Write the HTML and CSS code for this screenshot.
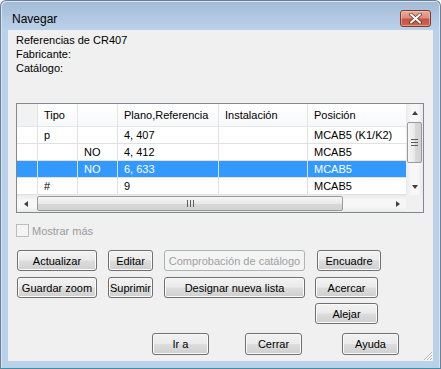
FILE: index.html
```html
<!DOCTYPE html>
<html lang="es">
<head>
  <meta charset="UTF-8" />
  <title>Navegar</title>
  <link rel="stylesheet" href="styles.css">
</head>
<body>

<div class="window">
  <div class="titlebar">
    <span class="title">Navegar</span>
    <span class="close">
      <svg width="13" height="11" viewBox="0 0 13 11">
        <path d="M2 1.5 L11 9.5 M11 1.5 L2 9.5" stroke="#5a2a24" stroke-width="3.6" stroke-linecap="round" fill="none"/>
        <path d="M2 1.5 L11 9.5 M11 1.5 L2 9.5" stroke="#ffffff" stroke-width="2.2" stroke-linecap="round" fill="none"/>
      </svg>
    </span>
  </div>

  <div class="client">
    <div class="info">
      <div>Referencias de CR407</div>
      <div>Fabricante:</div>
      <div>Catálogo:</div>
    </div>

    <div class="datagrid">
      <div class="dg-body">
        <div class="dg-rows">
          <div class="dg-row dg-head">
            <div class="cell c-sel"></div>
            <div class="cell c-tipo">Tipo</div>
            <div class="cell c-no"></div>
            <div class="cell c-plano">Plano,Referencia</div>
            <div class="cell c-inst">Instalación</div>
            <div class="cell c-pos">Posición</div>
          </div>
          <div class="dg-row">
            <div class="cell c-sel"></div>
            <div class="cell c-tipo">p</div>
            <div class="cell c-no"></div>
            <div class="cell c-plano">4, 407</div>
            <div class="cell c-inst"></div>
            <div class="cell c-pos">MCAB5 (K1/K2)</div>
          </div>
          <div class="dg-row">
            <div class="cell c-sel"></div>
            <div class="cell c-tipo"></div>
            <div class="cell c-no">NO</div>
            <div class="cell c-plano">4, 412</div>
            <div class="cell c-inst"></div>
            <div class="cell c-pos">MCAB5</div>
          </div>
          <div class="dg-row selected">
            <div class="cell c-sel"></div>
            <div class="cell c-tipo"></div>
            <div class="cell c-no">NO</div>
            <div class="cell c-plano">6, 633</div>
            <div class="cell c-inst"></div>
            <div class="cell c-pos">MCAB5</div>
          </div>
          <div class="dg-row">
            <div class="cell c-sel"></div>
            <div class="cell c-tipo">#</div>
            <div class="cell c-no"></div>
            <div class="cell c-plano">9</div>
            <div class="cell c-inst"></div>
            <div class="cell c-pos">MCAB5</div>
          </div>
        </div>

        <div class="vscroll">
          <div class="sb-btn"><span class="arr arr-up"></span></div>
          <div class="sb-track">
            <div class="thumb thumb-v"><span class="grip-v"></span></div>
          </div>
          <div class="sb-btn"><span class="arr arr-down"></span></div>
        </div>
      </div>

      <div class="dg-foot">
        <div class="hscroll">
          <div class="sb-btn"><span class="arr arr-left"></span></div>
          <div class="sb-track">
            <div class="thumb thumb-h"><span class="grip-h"></span></div>
          </div>
          <div class="sb-btn"><span class="arr arr-right"></span></div>
        </div>
        <div class="corner"></div>
      </div>
    </div>

    <div class="check">
      <span class="box"></span>
      <span class="check-label">Mostrar más</span>
    </div>

    <div class="btn-row row1">
      <button class="btn w80 ml1">Actualizar</button>
      <button class="btn w45 ml11">Editar</button>
      <button class="btn w141 ml11" disabled>Comprobación de catálogo</button>
      <button class="btn w64 ml12">Encuadre</button>
    </div>
    <div class="btn-row row2">
      <button class="btn w80 ml1">Guardar zoom</button>
      <button class="btn w45 ml11">Suprimir</button>
      <button class="btn w141 ml11">Designar nueva lista</button>
      <button class="btn w63 ml10">Acercar</button>
    </div>
    <div class="btn-row row3">
      <button class="btn w63 ml299">Alejar</button>
    </div>
    <div class="btn-row row4">
      <button class="btn w57 ml136">Ir a</button>
      <button class="btn w57 ml36">Cerrar</button>
      <button class="btn w57 ml40">Ayuda</button>
    </div>

    <svg class="sizegrip" width="11" height="11" viewBox="0 0 11 11">
      <path d="M10 2 L2 10 M10 5 L5 10 M10 8 L8 10" stroke="#b8b8b8" stroke-width="1" fill="none"/>
      <path d="M10.7 2.7 L2.7 10.7 M10.7 5.7 L5.7 10.7" stroke="#ffffff" stroke-width="0.8" fill="none"/>
    </svg>
  </div>
</div>

</body>
</html>
```

FILE: styles.css
```css
body {
  margin: 0;
  background: #ffffff;
  font-family: "Liberation Sans", Arial, sans-serif;
  font-size: 11px;
  color: #000000;
}

.window {
  box-sizing: border-box;
  width: 441px;
  height: 369px;
  border: 1px solid #6c8099;
  border-bottom-color: #3f8ea3;
  border-radius: 6px 6px 0 0;
  padding: 0 7px 7px;
  background: linear-gradient(to bottom, #a3bad5 0px, #b3c9e3 18px, #bad1ea 29px, #bad1ea 100%);
  box-shadow: inset 1px 1px 0 #d6e4f3, inset -1px 0 0 #d6e4f3;
}

/* title bar */
.titlebar {
  height: 29px;
  display: flex;
  align-items: flex-start;
}

.title {
  margin-top: 11px;
  margin-left: 4px;
  font-size: 12px;
  line-height: 15px;
  color: #000000;
}

.close {
  box-sizing: border-box;
  width: 31px;
  height: 17px;
  margin-top: 9px;
  margin-left: auto;
  margin-right: 2px;
  border: 1px solid #7e3a31;
  border-radius: 3px;
  background: linear-gradient(to bottom, #e9aa9b 0%, #dc8d7b 45%, #c9533f 55%, #cd644f 100%);
  box-shadow: inset 0 0 0 1px rgba(255, 220, 210, 0.45);
  display: flex;
  align-items: center;
  justify-content: center;
}

.close svg {
  display: block;
}

/* client area */
.client {
  position: relative;
  box-sizing: border-box;
  height: 331px;
  background: #f0f0f0;
  padding: 3px 0 0 8px;
}

.info {
  line-height: 14px;
}

/* data grid */
.datagrid {
  box-sizing: border-box;
  width: 408px;
  height: 110px;
  margin-top: 28px;
  border: 1px solid #828790;
  background: #ffffff;
}

.dg-body {
  display: flex;
  height: 91px;
}

.dg-rows {
  width: 389px;
}

.dg-row {
  display: flex;
  height: 17px;
}

.dg-head {
  height: 23px;
  background: linear-gradient(to bottom, #ffffff, #f7f8fa);
}

.cell {
  box-sizing: border-box;
  height: 100%;
  border-right: 1px solid #e1e1e1;
  border-bottom: 1px solid #e1e1e1;
  padding-left: 6px;
  display: flex;
  align-items: center;
  white-space: nowrap;
  overflow: hidden;
}

.dg-head .cell {
  border-right-color: #e4e5e7;
  border-bottom-color: #e4e5e7;
}

.dg-head .c-sel {
  background: #f2f2f2;
}

.c-sel { width: 21px; }
.c-tipo { width: 40px; }
.c-no { width: 40px; }
.c-plano { width: 101px; }
.c-inst { width: 89px; }
.c-pos { width: 98px; border-right: none; }

.dg-row.selected .cell {
  background: #3399ff;
  color: #ffffff;
  border-right-color: #cfe5fb;
  border-bottom-color: #e1e1e1;
}

/* scrollbars */
.vscroll {
  width: 17px;
  display: flex;
  flex-direction: column;
  background: linear-gradient(to right, #eaeaea, #f7f7f7 30%, #f7f7f7 70%, #eaeaea);
}

.sb-btn {
  width: 17px;
  height: 17px;
  flex: none;
  display: flex;
  align-items: center;
  justify-content: center;
}

.sb-track {
  flex: 1;
  display: flex;
}

.vscroll .sb-track {
  flex-direction: column;
}

.thumb {
  box-sizing: border-box;
  border: 1px solid #9a9a9a;
  border-radius: 2px;
  display: flex;
  align-items: center;
  justify-content: center;
}

.thumb-v {
  width: 15px;
  height: 41px;
  margin: 1px 0 0 1px;
  background: linear-gradient(to right, #f6f6f6, #e9e9e9 50%, #d8d8d8 55%, #d2d2d2);
}

.grip-v {
  width: 7px;
  height: 5px;
  border-top: 1px solid #606060;
  border-bottom: 1px solid #606060;
  background: linear-gradient(to bottom, transparent 2px, #606060 2px, #606060 3px, transparent 3px);
}

.dg-foot {
  display: flex;
  height: 17px;
}

.hscroll {
  width: 389px;
  display: flex;
  background: linear-gradient(to bottom, #eaeaea, #f7f7f7 30%, #f7f7f7 70%, #eaeaea);
}

.thumb-h {
  width: 306px;
  height: 15px;
  margin: 1px 0 0 3px;
  background: linear-gradient(to bottom, #f6f6f6, #e9e9e9 50%, #d8d8d8 55%, #d2d2d2);
}

.grip-h {
  width: 5px;
  height: 7px;
  border-left: 1px solid #606060;
  border-right: 1px solid #606060;
  background: linear-gradient(to right, transparent 2px, #606060 2px, #606060 3px, transparent 3px);
}

.hscroll .sb-btn:last-child {
  margin-left: auto;
}

.corner {
  width: 17px;
  background: #f0f0f0;
}

.arr {
  width: 0;
  height: 0;
  border-style: solid;
  border-color: transparent;
}

.arr-up {
  border-width: 0 3.5px 4px;
  border-bottom-color: #404040;
}

.arr-down {
  border-width: 4px 3.5px 0;
  border-top-color: #404040;
}

.arr-left {
  border-width: 3.5px 4px 3.5px 0;
  border-right-color: #404040;
}

.arr-right {
  border-width: 3.5px 0 3.5px 4px;
  border-left-color: #404040;
}

/* checkbox */
.check {
  display: flex;
  align-items: center;
  height: 13px;
  margin-top: 11px;
}

.box {
  box-sizing: border-box;
  width: 13px;
  height: 13px;
  border: 1px solid #bcbcbc;
  background: #f4f4f4;
}

.check-label {
  margin-left: 3px;
  margin-top: 1px;
  color: #9b9b9b;
  line-height: 13px;
}

/* buttons */
.btn-row {
  display: flex;
}

.row1 { margin-top: 13px; }
.row2 { margin-top: 6px; }
.row3 { margin-top: 5px; }
.row4 { margin-top: 9px; }

.btn {
  box-sizing: border-box;
  height: 21px;
  padding: 0;
  border: 1px solid #707070;
  border-radius: 3px;
  background: linear-gradient(to bottom, #f2f2f2 0%, #ebebeb 48%, #dddddd 52%, #cfcfcf 100%);
  box-shadow: inset 0 0 0 1px #fbfbfb;
  font-family: "Liberation Sans", Arial, sans-serif;
  font-size: 11px;
  color: #000000;
  white-space: nowrap;
}

.row4 .btn {
  height: 22px;
}

.btn:disabled {
  border-color: #adb2b5;
  background: #f4f4f4;
  box-shadow: none;
  color: #a0a0a0;
}

.w45 { width: 45px; }
.w57 { width: 57px; }
.w63 { width: 63px; }
.w64 { width: 64px; }
.w80 { width: 80px; }
.w141 { width: 141px; }

.ml1 { margin-left: 1px; }
.ml10 { margin-left: 10px; }
.ml11 { margin-left: 11px; }
.ml12 { margin-left: 12px; }
.ml36 { margin-left: 36px; }
.ml40 { margin-left: 40px; }
.ml136 { margin-left: 136px; }
.ml299 { margin-left: 299px; }

.sizegrip {
  position: absolute;
  right: 0;
  bottom: 0;
}
```
